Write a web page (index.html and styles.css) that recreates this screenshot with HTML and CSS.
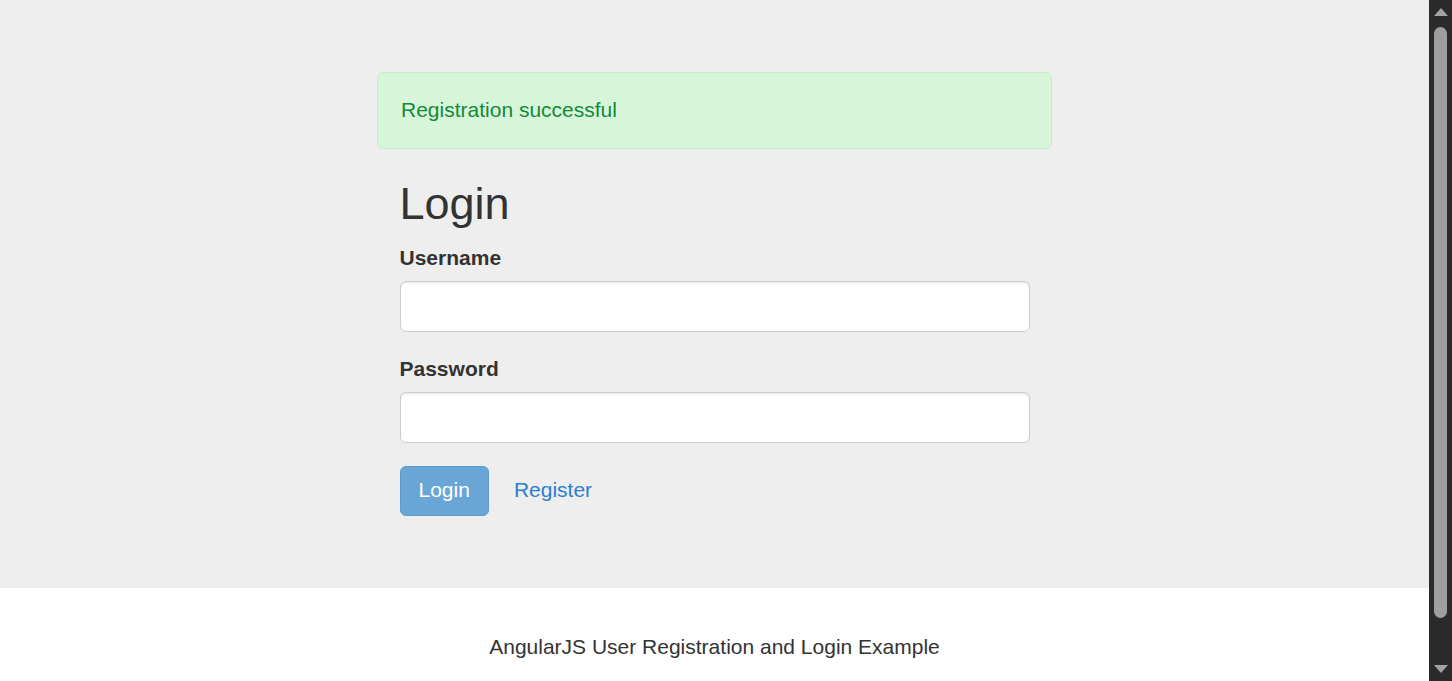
FILE: index.html
```html
<!DOCTYPE html>
<html lang="en">
<head>
<meta charset="utf-8">
<title>AngularJS User Registration and Login Example</title>
<link rel="stylesheet" href="styles.css">
</head>
<body>
  <div class="page">
    <div class="jumbotron">
      <div class="wrap">
        <div class="alert">Registration successful</div>
        <div class="view">
          <h2 class="title">Login</h2>
          <form class="form" name="form">
            <div class="form-group">
              <label class="label" for="username">Username</label>
              <input class="input" type="text" id="username" name="username">
            </div>
            <div class="form-group">
              <label class="label" for="password">Password</label>
              <input class="input" type="password" id="password" name="password">
            </div>
            <div class="actions">
              <button class="btn" type="submit" disabled>Login</button>
              <a class="link" href="#/register">Register</a>
            </div>
          </form>
        </div>
      </div>
    </div>
    <div class="credits">
      <p class="credits-text">AngularJS User Registration and Login Example</p>
    </div>
  </div>
  <div class="scrollbar">
    <div class="arrow arrow-up"></div>
    <div class="track"><div class="thumb"></div></div>
    <div class="arrow arrow-down"></div>
  </div>
</body>
</html>
```

FILE: styles.css
```css
* { box-sizing: border-box; }

html, body {
  margin: 0;
  height: 681px;
  overflow: hidden;
}

body {
  display: flex;
  font-family: "Liberation Sans", Arial, sans-serif;
  font-size: 21px;
  line-height: 30px;
  color: #333;
  background: #fff;
}

.page {
  flex: 1;
  min-width: 0;
  overflow: hidden;
}

.jumbotron {
  background: #eeeeee;
  padding: 72px 0 72px;
}

.wrap {
  width: 675px;
  margin: 0 auto;
}

.alert {
  background: #d6f5d9;
  border: 1px solid #c6ecc8;
  border-radius: 6px;
  color: #14893a;
  padding: 22px 23px 23px;
  font-size: 21px;
  line-height: 30px;
}

.view {
  padding: 0 22.5px;
}

.title {
  margin: 30px 0 14px;
  font-size: 45px;
  line-height: 50px;
  font-weight: 500;
  color: #333;
}

.form { margin: 0; }

.form-group {
  margin-bottom: 22px;
}

.form-group + .form-group {
  margin-bottom: 23px;
}

.label {
  display: block;
  font-weight: bold;
  line-height: 30px;
  margin-bottom: 8px;
  color: #333;
}

.input {
  display: block;
  width: 100%;
  height: 51px;
  border: 1.5px solid #cccccc;
  border-radius: 6px;
  background: #fff;
  box-shadow: inset 0 1.5px 1.5px rgba(0, 0, 0, 0.075);
  font: inherit;
  padding: 9px 18px;
}

.actions {
  display: flex;
  align-items: center;
  gap: 25px;
}

.btn {
  height: 50px;
  padding: 0 18px 2px;
  border: 1.5px solid #5b9bd1;
  border-radius: 6px;
  background: #69a6d6;
  color: #fff;
  font: inherit;
  line-height: 30px;
}

.link {
  color: #2a80d0;
  text-decoration: none;
  padding-bottom: 2px;
}

.credits {
  padding-top: 44px;
  text-align: center;
}

.credits-text {
  margin: 0;
}

.scrollbar {
  width: 23px;
  flex: none;
  background: #2b2b2b;
  display: flex;
  flex-direction: column;
  align-items: center;
}

.arrow {
  width: 0;
  height: 0;
  border-left: 7.5px solid transparent;
  border-right: 7.5px solid transparent;
}

.arrow-up {
  margin-top: 8px;
  border-bottom: 8px solid #a3a3a3;
}

.arrow-down {
  margin-bottom: 8px;
  border-top: 8px solid #a3a3a3;
}

.track {
  flex: 1;
  width: 100%;
  display: flex;
  justify-content: center;
  padding: 11px 0 47px;
}

.thumb {
  width: 13px;
  height: 100%;
  background: #9e9e9e;
  border-radius: 7px;
}
```
